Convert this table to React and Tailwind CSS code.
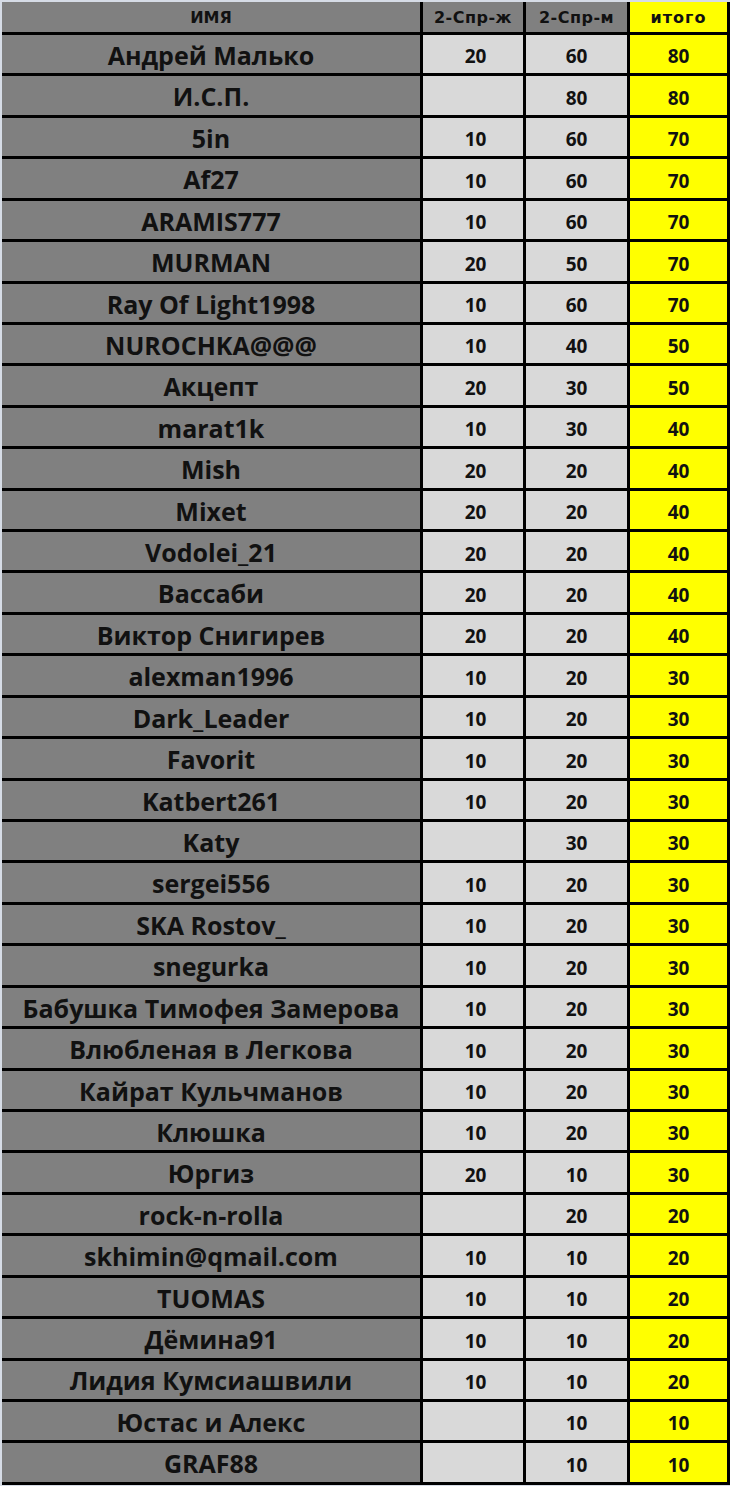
// App.jsx - таблица итогов по участникам
const rows = [
  ['Андрей Малько', '20', '60', '80'],
  ['И.С.П.', '', '80', '80'],
  ['5in', '10', '60', '70'],
  ['Af27', '10', '60', '70'],
  ['ARAMIS777', '10', '60', '70'],
  ['MURMAN', '20', '50', '70'],
  ['Ray Of Light1998', '10', '60', '70'],
  ['NUROCHKA@@@', '10', '40', '50'],
  ['Акцепт', '20', '30', '50'],
  ['marat1k', '10', '30', '40'],
  ['Mish', '20', '20', '40'],
  ['Mixet', '20', '20', '40'],
  ['Vodolei_21', '20', '20', '40'],
  ['Вассаби', '20', '20', '40'],
  ['Виктор Снигирев', '20', '20', '40'],
  ['alexman1996', '10', '20', '30'],
  ['Dark_Leader', '10', '20', '30'],
  ['Favorit', '10', '20', '30'],
  ['Katbert261', '10', '20', '30'],
  ['Katy', '', '30', '30'],
  ['sergei556', '10', '20', '30'],
  ['SKA Rostov_', '10', '20', '30'],
  ['snegurka', '10', '20', '30'],
  ['Бабушка Тимофея Замерова', '10', '20', '30'],
  ['Влюбленая в Легкова', '10', '20', '30'],
  ['Кайрат Кульчманов', '10', '20', '30'],
  ['Клюшка', '10', '20', '30'],
  ['Юргиз', '20', '10', '30'],
  ['rock-n-rolla', '', '20', '20'],
  ['skhimin@qmail.com', '10', '10', '20'],
  ['TUOMAS', '10', '10', '20'],
  ['Дёмина91', '10', '10', '20'],
  ['Лидия Кумсиашвили', '10', '10', '20'],
  ['Юстас и Алекс', '', '10', '10'],
  ['GRAF88', '', '10', '10'],
];

const headFont = "font-['Comic_Sans_MS','DejaVu_Sans',sans-serif]";

export default function App() {
  return (
    <div className="w-[730px] h-[1486px] bg-[#d6dce6] pt-[2px] pl-[2px] font-['Open_Sans',sans-serif]">
      <div className="w-[728px] grid grid-cols-[418px_100px_101px_97px] grid-rows-[30px_repeat(35,38.43px)] gap-[3px] pr-[3px] pb-[3px] bg-black text-[#111]">
        {/* шапка */}
        <div className={`bg-[#808080] flex items-center justify-center pt-[1px] text-[16px] font-bold ${headFont}`}>ИМЯ</div>
        <div className={`bg-[#808080] flex items-center justify-center pt-[1px] text-[16px] font-bold tracking-[0.5px] ${headFont}`}>2-Спр-ж</div>
        <div className={`bg-[#808080] flex items-center justify-center pt-[1px] text-[16px] font-bold tracking-[0.5px] ${headFont}`}>2-Спр-м</div>
        <div className={`bg-[#ffff00] flex items-center justify-center pt-[1px] text-[16px] font-bold tracking-[1px] ${headFont}`}>итого</div>

        {rows.map(([name, a, b, total], i) => (
          <div key={i} className="contents">
            <div className="bg-[#808080] flex items-center justify-center pt-[3px] text-[25px] font-bold whitespace-nowrap">
              {name}
            </div>
            <div className="bg-[#d9d9d9] flex items-center justify-center pt-[5px] pl-[5px] text-[19px] font-bold">{a}</div>
            <div className="bg-[#d9d9d9] flex items-center justify-center pt-[5px] text-[19px] font-bold">{b}</div>
            <div className="bg-[#ffff00] flex items-center justify-center pt-[5px] text-[19px] font-bold">{total}</div>
          </div>
        ))}
      </div>
    </div>
  );
}
